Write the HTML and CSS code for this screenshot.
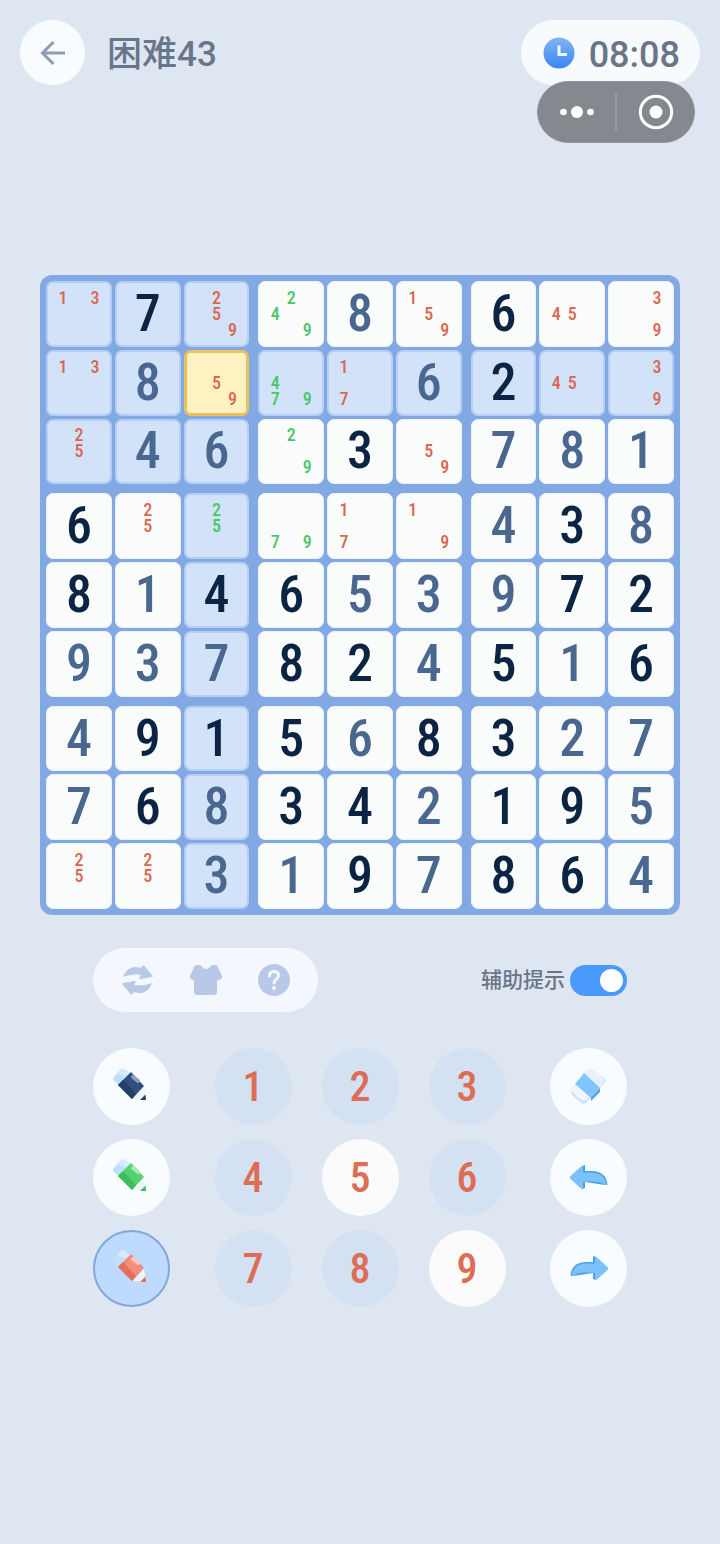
FILE: index.html
```html
<!DOCTYPE html>
<html lang="zh-CN">

<head>
    <meta charset="UTF-8">
    <meta name="viewport" content="width=device-width, initial-scale=1.0">
    <title>困难43</title>
    <link rel="stylesheet" href="styles.css">
</head>

<body>
    <header class="header">
        <button type="button" class="back" aria-label="返回">
            <svg width="26" height="26" viewBox="0 0 26 26" fill="none" stroke="#8e9db2" stroke-width="3">
                <path d="M25 13H2M13.500 2L2.500 13l11 11" />
            </svg>
        </button>
        <h1 class="title">困难43</h1>
        <div class="status">
            <div class="timer">
                <svg width="32" height="32" viewBox="0 0 32 32">
                    <defs>
                        <linearGradient id="clockFill" x1="0" y1="0" x2="0" y2="1">
                            <stop offset="0" stop-color="#82b4f5" />
                            <stop offset="1" stop-color="#3984f3" />
                        </linearGradient>
                    </defs>
                    <circle cx="16" cy="16" r="15.500" fill="url(#clockFill)" />
                    <path d="M16 8.500v9h8" fill="none" stroke="#eef6ff" stroke-width="3" />
                </svg>
                <span class="time">08:08</span>
            </div>
            <div class="capsule">
                <button type="button" class="capsule-button" aria-label="更多">
                    <svg width="34" height="14" viewBox="0 0 34 14" fill="#fff">
                        <circle cx="3.500" cy="7" r="3.300" />
                        <circle cx="17" cy="7" r="6" />
                        <circle cx="30.500" cy="7" r="3.300" />
                    </svg>
                </button>
                <button type="button" class="capsule-button" aria-label="关闭">
                    <svg width="36" height="36" viewBox="0 0 36 36">
                        <circle cx="18" cy="18" r="15.700" fill="none" stroke="#fff" stroke-width="3" />
                        <circle cx="18" cy="18" r="6.500" fill="#fff" />
                    </svg>
                </button>
            </div>
        </div>
    </header>

    <main>
        <div id="board" class="board"></div>

        <div class="controls">
            <div class="toolbar">
                <div class="menu">
                    <button type="button" class="menu-button" aria-label="重新开始">
                        <svg width="34" height="34" viewBox="-2 -2 34 34" fill="#b8c9e8">
                            <path d="M0 12C3 3 11 0 18 3L19.500 1q1-1 2 0l8 9.500q1 1.500-1 1.500l-11 2q-2 0-1-1.500l1.500-2.500C12 9 5 10 0 12z" />
                            <path d="M0 12C3 3 11 0 18 3L19.500 1q1-1 2 0l8 9.500q1 1.500-1 1.500l-11 2q-2 0-1-1.500l1.500-2.500C12 9 5 10 0 12z" transform="rotate(180 14.500 15)" />
                        </svg>
                    </button>
                    <button type="button" class="menu-button" aria-label="皮肤">
                        <svg width="34" height="34" viewBox="0 0 34 34" fill="#b8c9e8">
                            <path d="M8 2h3q1 0 2 2 4 4 8 0 1-2 2-2h3q2 0 3 2l4 9q1 2-1 3l-4 2v11q0 3-3 3H8q-3 0-3-3V18l-3-2q-2-1-1-3L5 4q1-2 3-2z" />
                        </svg>
                    </button>
                    <button type="button" class="menu-button" aria-label="帮助">
                        <svg width="34" height="34" viewBox="0 0 34 34">
                            <circle cx="17" cy="17" r="16" fill="#b8c9e8" />
                            <path d="M12.500 13q0-4.500 4.500-4.500t4.500 4q0 2-2.500 4-2 1.500-2 3.500" fill="none" stroke="#f4f8fe" stroke-width="3" stroke-linecap="round" />
                            <circle cx="17" cy="25" r="2" fill="#f4f8fe" />
                        </svg>
                    </button>
                </div>
                <label class="hint" for="hintSwitch">辅助提示
                    <input type="checkbox" id="hintSwitch" class="switch" checked>
                </label>
            </div>

            <div class="pad">
                <div class="pad-column">
                    <button type="button" class="round pen-navy" aria-label="蓝色笔">
                        <svg width="38" height="38" viewBox="0 0 38 38"><use href="#pen" /></svg>
                    </button>
                    <button type="button" class="round pen-green" aria-label="绿色笔">
                        <svg width="38" height="38" viewBox="0 0 38 38"><use href="#pen" /></svg>
                    </button>
                    <button type="button" class="round pen-red active" aria-label="红色笔">
                        <svg width="38" height="38" viewBox="0 0 38 38"><use href="#pen" /></svg>
                    </button>
                </div>

                <div class="digits">
                    <button type="button" class="round digit">1</button>
                    <button type="button" class="round digit">2</button>
                    <button type="button" class="round digit">3</button>
                    <button type="button" class="round digit">4</button>
                    <button type="button" class="round digit on">5</button>
                    <button type="button" class="round digit">6</button>
                    <button type="button" class="round digit">7</button>
                    <button type="button" class="round digit">8</button>
                    <button type="button" class="round digit on">9</button>
                </div>

                <div class="pad-column">
                    <button type="button" class="round" aria-label="擦除">
                        <svg width="38" height="38" viewBox="0 0 38 38">
                            <path d="M4 20l-3 3q-1 2 1 4l8 7q3 3 6 1l19-20q2-2 0-4l-3-3z" fill="#cfe2fa" />
                            <path d="M5 16l-4 4q-1 2 1 4l8 7q3 3 6 1l5-3z" fill="#f0f6fe" />
                            <path d="M14 5l3-3q3-2 6 0l11 9q2 2 0 4l-4 5z" fill="#e6f1fd" />
                            <path d="M30 20l-9 9v4l9-9z" fill="#4fa4e9" />
                            <path d="M14 5l16 15-9 10L5 16z" fill="#80c5fc" />
                        </svg>
                    </button>
                    <button type="button" class="round" aria-label="撤销">
                        <svg width="38" height="38" viewBox="0 0 38 38"><use href="#arrow" /></svg>
                    </button>
                    <button type="button" class="round" aria-label="重做">
                        <svg width="38" height="38" viewBox="0 0 38 38"><use href="#arrow" transform="matrix(-1 0 0 1 38 0)" /></svg>
                    </button>
                </div>
            </div>
        </div>
    </main>

    <!-- shared icon shapes -->
    <svg class="symbols" width="0" height="0" aria-hidden="true">
        <defs>
            <g id="pen">
                <path d="M1 9l7-8q2-1 4 0l5 4L6 17 1 13q-2-2 0-4z" fill="#bfe0fb" />
                <path d="M4 5l4-4q2-1 4 0l5 4-4 4z" fill="#d5ebfd" />
                <path d="M31 18l2 14-13-1z" fill="#edf4fd" />
                <path d="M32.500 26.500l.5 5.500h-6z" fill="var(--pen-dark)" />
                <path d="M18 4l13 14-12 13L5 17z" fill="var(--pen)" />
                <path d="M5 17l5-5 13 14-4 5z" fill="var(--pen-dark)" />
                <path d="M20 9l5 4" stroke="var(--pen-light)" stroke-width="4" stroke-linecap="round" />
            </g>
            <g id="arrow">
                <path d="M12 7l3-1v6h7c9 0 15 5 15.500 14H35L15 23v6l-3 1z" fill="#4b9fe2" />
                <path d="M0 17.500L11.500 7q1.500-1 1.500 1v5.500h8c9 0 14 4 15.500 12.500H35c-5-3.500-11-4-22-3v6q0 2-1.500 1L0 19.500q-1-1 0-2z" fill="#7bc2fb" />
            </g>
        </defs>
    </svg>

    <script src="script.js"></script>
</body>

</html>
```

FILE: styles.css
```css
* {
    box-sizing: border-box;
}

body {
    margin: 0;
    min-height: 100vh;
    background-color: #dee6f1;
    color: #697588;
    font-family: Roboto, "Noto Sans CJK SC", sans-serif;
}

button {
    display: flex;
    align-items: center;
    justify-content: center;
    margin: 0;
    padding: 0;
    border: none;
    background: none;
    color: inherit;
    font-family: inherit;
    cursor: pointer;
}

.header {
    display: flex;
    align-items: center;
    padding: 20px;
}

.back {
    width: 65px;
    height: 65px;
    border-radius: 50%;
    background-color: #f9fcfe;
}

.title,
.time {
    padding-top: 4px;
    font-weight: 500;
    line-height: 48px;
}

.title {
    margin: 0 0 0 22px;
    font-size: 35px;
}

.time {
    font-size: 36px;
}

.status {
    position: relative;
    margin-left: auto;
}

.timer {
    display: flex;
    align-items: center;
    gap: 14px;
    height: 65px;
    padding: 0 20px 0 22px;
    border-radius: 33px;
    background-color: #f8fbfd;
}

/* floats over the lower edge of the timer */
.capsule {
    position: absolute;
    top: 61px;
    right: 5px;
    display: flex;
    width: 158px;
    height: 62px;
    padding: 11px 0;
    border: 1px solid #94979d;
    border-radius: 31px;
    background-color: #85898f;
}

.capsule-button {
    flex: 1;
}

.capsule-button + .capsule-button {
    border-left: 2px solid #989ba1;
}

main {
    padding: 170px 40px 40px;
}

.board {
    display: grid;
    grid-template-columns: repeat(3, 1fr);
    gap: 9px;
    padding: 6px;
    border-radius: 12px;
    background-color: #83a9e5;
}

.box {
    display: grid;
    grid-template-columns: repeat(3, 1fr);
    gap: 3px;
}

.cell {
    aspect-ratio: 1;
    min-width: 0;
    border: 1px solid #ebf2fc;
    border-radius: 7px;
    background-color: #fafbfb;
    color: #4a6790;
    font-family: "Roboto Condensed", "Liberation Sans Narrow", Roboto, sans-serif;
    font-size: 52px;
    font-weight: 500;
    line-height: 60px;
}

.cell.given {
    color: #0c2444;
}

.cell.related {
    border: 2px solid #b5cef5;
    background-color: #d2e3f9;
}

.cell.selected {
    border: 3px solid #edc159;
    background-color: #fff2c2;
}

.notes {
    display: grid;
    grid-template-columns: repeat(3, 16px);
    grid-template-rows: repeat(3, 16px);
    font-size: 18px;
    font-weight: 500;
    line-height: 16px;
    color: #db6652;
}

.notes.green {
    color: #4bc667;
}

.controls {
    max-width: 534px;
    margin: 33px auto 0;
}

.toolbar {
    display: flex;
    align-items: center;
    justify-content: space-between;
}

.menu {
    display: flex;
    align-items: center;
    justify-content: center;
    gap: 34px;
    width: 225px;
    height: 64px;
    border-radius: 32px;
    background-color: #f4f8fe;
}

.hint {
    display: flex;
    align-items: center;
    gap: 5px;
    font-size: 21px;
    font-weight: 500;
    line-height: 32px;
}

.switch {
    appearance: none;
    display: flex;
    align-items: center;
    justify-content: flex-end;
    width: 57px;
    height: 31px;
    margin: 0;
    padding: 4px;
    border-radius: 16px;
    background-color: #4a99fd;
}

.switch::before {
    content: "";
    width: 23px;
    height: 23px;
    border-radius: 50%;
    background-color: #fff;
}

.switch:not(:checked) {
    justify-content: flex-start;
    background-color: #b8c9e8;
}

.pad {
    display: flex;
    justify-content: space-between;
    margin-top: 36px;
}

.pad-column {
    display: grid;
    gap: 14px;
}

.digits {
    display: grid;
    grid-template-columns: repeat(3, auto);
    gap: 14px 30px;
}

.round {
    width: 77px;
    height: 77px;
    border-radius: 50%;
    background-color: #f9fcfe;
}

.round.active {
    border: 2px solid #82a7dc;
    background-color: #bfdaff;
}

.digit {
    background-color: #d4e1f2;
    color: #de6d56;
    font-family: "Roboto Condensed", "Liberation Sans Narrow", Roboto, sans-serif;
    font-size: 42px;
    font-weight: 500;
    line-height: 48px;
}

.digit.on {
    background-color: #fbfbfb;
}

.pen-navy {
    --pen: #2f4e7e;
    --pen-dark: #243e6a;
    --pen-light: #8a9fbe;
}

.pen-green {
    --pen: #55d26e;
    --pen-dark: #3fbd5c;
    --pen-light: #a4ecb1;
}

.pen-red {
    --pen: #f48c7c;
    --pen-dark: #e56f5d;
    --pen-light: #fbc4ba;
}

.symbols {
    position: absolute;
}
```

FILE: script.js
```js
// "*" marks a given number, "r" red notes, "g" green notes
const puzzle = [
    ["r13", "7*", "r259", "g249", "8", "r159", "6*", "r45", "r39"],
    ["r13", "8", "r59", "g479", "r17", "6", "2*", "r45", "r39"],
    ["r25", "4", "6", "g29", "3*", "r59", "7", "8", "1"],
    ["6*", "r25", "g25", "g79", "r17", "r19", "4", "3*", "8"],
    ["8*", "1", "4*", "6*", "5", "3", "9", "7*", "2*"],
    ["9", "3", "7", "8*", "2*", "4", "5*", "1", "6*"],
    ["4", "9*", "1*", "5*", "6", "8*", "3*", "2", "7"],
    ["7", "6*", "8", "3*", "4*", "2", "1*", "9*", "5"],
    ["r25", "r25", "3", "1", "9*", "7", "8*", "6*", "4"]
];

const selected = { row: 1, col: 2 };
const board = document.getElementById("board");

function isRelated(row, col) {
    const sameBox = Math.floor(row / 3) === Math.floor(selected.row / 3) &&
        Math.floor(col / 3) === Math.floor(selected.col / 3);
    return row === selected.row || col === selected.col || sameBox;
}

function createNotes(value) {
    const notes = document.createElement("span");
    notes.className = value[0] === "g" ? "notes green" : "notes";
    for (let n = 1; n <= 9; n++) {
        const note = document.createElement("span");
        if (value.slice(1).includes(n)) {
            note.textContent = n;
        }
        notes.appendChild(note);
    }
    return notes;
}

function createCell(row, col) {
    const value = puzzle[row][col];
    const cell = document.createElement("button");
    cell.type = "button";
    cell.className = "cell";

    if (value[0] === "r" || value[0] === "g") {
        cell.appendChild(createNotes(value));
    } else {
        cell.textContent = value[0];
    }
    if (value.endsWith("*")) {
        cell.classList.add("given");
    }
    if (row === selected.row && col === selected.col) {
        cell.classList.add("selected");
    } else if (isRelated(row, col)) {
        cell.classList.add("related");
    }
    return cell;
}

for (let b = 0; b < 9; b++) {
    const box = document.createElement("div");
    box.className = "box";
    for (let i = 0; i < 9; i++) {
        const row = Math.floor(b / 3) * 3 + Math.floor(i / 3);
        const col = (b % 3) * 3 + (i % 3);
        box.appendChild(createCell(row, col));
    }
    board.appendChild(box);
}
```
